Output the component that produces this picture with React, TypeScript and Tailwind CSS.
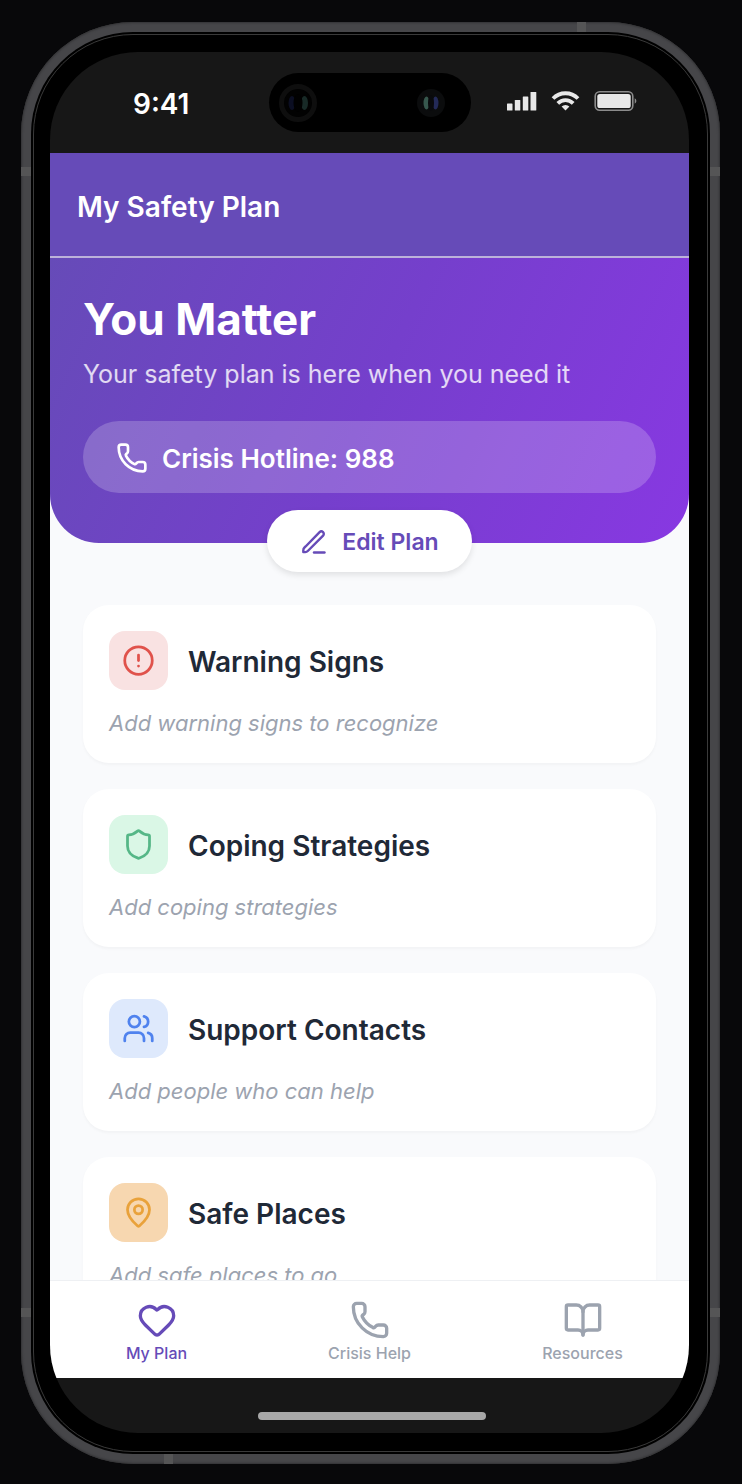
import React from "react";
import { BookOpen, CircleAlert, Heart, MapPin, Phone, Shield, Users } from "lucide-react";
import type { LucideIcon } from "lucide-react";

const sections: { title: string; hint: string; Icon: LucideIcon; tile: string }[] = [
  { title: "Warning Signs", hint: "Add warning signs to recognize", Icon: CircleAlert, tile: "bg-[#f9e2e2] text-[#e0524b]" },
  { title: "Coping Strategies", hint: "Add coping strategies", Icon: Shield, tile: "bg-[#daf7e6] text-[#55b787]" },
  { title: "Support Contacts", hint: "Add people who can help", Icon: Users, tile: "bg-[#dee9fc] text-[#4f82ee]" },
  { title: "Safe Places", hint: "Add safe places to go", Icon: MapPin, tile: "bg-[#f7d7b0] text-[#e9a23b]" },
];

const tabs: { label: string; Icon: LucideIcon; active?: boolean }[] = [
  { label: "My Plan", Icon: Heart, active: true },
  { label: "Crisis Help", Icon: Phone },
  { label: "Resources", Icon: BookOpen },
];

function PenIcon() {
  return (
    <svg className="size-7" viewBox="0 0 28 28" fill="none" stroke="currentColor" strokeWidth="2.4" strokeLinecap="round" strokeLinejoin="round" aria-hidden="true">
      <path d="M14 24.500h10.500" />
      <path d="M3.300 24.100v-1.700a4 4 0 0 1 1.100-2.700L19.600 4.200a2.400 2.400 0 0 1 3.500 3.400L7.800 23a3.500 3.500 0 0 1-2.500 1.100z" />
    </svg>
  );
}

function StatusIcons() {
  return (
    <svg className="h-[22px] w-[130px]" viewBox="0 0 130 22" fill="#e8e8e8" aria-hidden="true">
      <rect x="0" y="13.5" width="5.500" height="7" rx=".6" />
      <rect x="7.800" y="10" width="5.500" height="10.500" rx=".6" />
      <rect x="15.800" y="6.500" width="5.500" height="14" rx=".6" />
      <rect x="23.500" y="2" width="5.800" height="18.500" rx=".6" />
      <g fill="none" stroke="#e8e8e8" strokeWidth="3.800">
        <path d="M46 8.500a17.500 17.500 0 0 1 25 0" />
        <path d="M50.800 13.300a10.800 10.800 0 0 1 15.400 0" />
      </g>
      <path d="M58.500 20.500l-3.900-4a5.600 5.600 0 0 1 7.800 0z" />
      <rect x="88.200" y="1.800" width="37.600" height="18.400" rx="4.500" fill="none" stroke="#8b8b8b" strokeWidth="1.600" />
      <rect x="90.300" y="4" width="33.400" height="14" rx="2.600" />
      <path d="M127.700 8.300a3 3 0 0 1 0 5.400z" fill="#8b8b8b" />
    </svg>
  );
}

function Island() {
  return (
    <div className="flex h-[59px] items-center justify-between rounded-full bg-black pr-[26px] pl-[10px]">
      <svg className="size-[38px]" viewBox="0 0 38 38" aria-hidden="true">
        <circle cx="19" cy="19" r="16.500" fill="#020202" stroke="#0e0e0e" strokeWidth="5" />
        <ellipse cx="13" cy="19" rx="3.500" ry="7" fill="#0b0e22" />
        <ellipse cx="25.500" cy="19" rx="3.500" ry="7" fill="#182a27" />
        <ellipse cx="19" cy="19" rx="4.500" ry="9" fill="#010101" />
      </svg>
      <svg className="size-7" viewBox="0 0 28 28" aria-hidden="true">
        <circle cx="14" cy="14" r="14" fill="#0b0c0d" />
        <ellipse cx="9.500" cy="14" rx="3" ry="6.500" fill="#37584e" />
        <ellipse cx="18.500" cy="14" rx="3" ry="6.500" fill="#232a58" />
        <ellipse cx="14" cy="14" rx="3" ry="8" fill="#090a0d" />
      </svg>
    </div>
  );
}

function FrameSeams() {
  return (
    <>
      <span className="absolute top-0 right-[134px] h-[10px] w-[9px] bg-[#555556]" />
      <span className="absolute bottom-0 left-[143px] h-[10px] w-[9px] bg-[#555556]" />
      <span className="absolute top-[145px] left-0 h-[9px] w-[10px] bg-[#555556]" />
      <span className="absolute top-[145px] right-0 h-[9px] w-[10px] bg-[#555556]" />
      <span className="absolute bottom-[147px] left-0 h-[9px] w-[10px] bg-[#555556]" />
      <span className="absolute right-0 bottom-[147px] h-[9px] w-[10px] bg-[#555556]" />
    </>
  );
}

export default function App() {
  return (
    <div className="flex h-screen flex-col bg-[#08080a] px-[22px] pt-[22px] pb-[20px] pl-[21px] font-['Inter','Liberation_Sans',sans-serif]">
      <div className="relative flex min-h-0 flex-1 flex-col rounded-[112px] bg-[#464649] p-[10px] shadow-[inset_0_0_2px_1px_#333335]">
        <FrameSeams />
        <div className="flex min-h-0 flex-1 flex-col rounded-[102px] bg-black p-[2px]">
          <div className="flex min-h-0 flex-1 flex-col rounded-[100px] border border-[#3a3a3a] bg-black pt-[17px] pr-[18px] pb-[18px] pl-[16px]">
            <div className="flex min-h-0 flex-1 flex-col overflow-hidden rounded-[88px] bg-[#171717]">
              <div className="grid h-[101px] shrink-0 grid-cols-[1fr_202px_1fr] items-center">
                <span className="pt-0.5 pl-[83px] text-[28px] leading-8 font-semibold text-white">9:41</span>
                <Island />
                <div className="pb-1 pl-[36px]">
                  <StatusIcons />
                </div>
              </div>

              <header className="flex h-[105px] shrink-0 items-center border-b-2 border-[#bcb2da] bg-[#664bb8] px-[27px] pt-1">
                <h1 className="text-[28px] leading-8 font-semibold text-white">My Safety Plan</h1>
              </header>

              <main className="min-h-0 flex-1 overflow-y-auto bg-[#f9fafc] [scrollbar-width:none]">
                <section className="rounded-b-[49px] bg-linear-[115deg] from-[#664bb8] via-[#753fcc] to-[#8838e2] px-[33px] pt-8 pb-[50px] text-white">
                  <h2 className="text-[44px] leading-[58px] font-bold">You Matter</h2>
                  <p className="mt-2 text-[25px] leading-9 text-white/80">Your safety plan is here when you need it</p>
                  <a href="tel:988" className="mt-[29px] flex h-[72px] items-center gap-[14px] rounded-full bg-white/20 px-[33px] pt-0.5 text-[26px] font-semibold">
                    <Phone className="size-8" strokeWidth={2} />
                    Crisis Hotline: 988
                  </a>
                </section>

                <button type="button" className="relative mx-auto -mt-[33px] flex h-[62px] items-center gap-[14px] rounded-full bg-white px-[33px] pt-0.5 text-[23px] font-semibold text-[#664bb8] shadow-[0_3px_6px_rgba(0,0,0,0.1)]">
                  <PenIcon />
                  Edit Plan
                </button>

                <div className="mt-[33px] flex flex-col gap-[26px] px-[33px]">
                  {sections.map(({ title, hint, Icon, tile }) => (
                    <section key={title} className="rounded-[26px] bg-white p-[26px] shadow-[0_2px_3px_rgba(0,0,0,0.03)]">
                      <div className="flex items-center gap-5">
                        <span className={`flex size-[59px] items-center justify-center rounded-2xl ${tile}`}>
                          <Icon className="size-[33px]" strokeWidth={2} />
                        </span>
                        <h3 className="pt-0.5 text-[28px] leading-8 font-semibold text-[#1f2937]">{title}</h3>
                      </div>
                      <p className="mt-[19px] text-[22px] leading-7 text-[#9ca3af] italic">{hint}</p>
                    </section>
                  ))}
                </div>
              </main>

              <nav className="grid h-[98px] shrink-0 grid-cols-3 border-t border-[#eef0f3] bg-white">
                {tabs.map(({ label, Icon, active }) => (
                  <button key={label} type="button" className={`flex flex-col items-center pt-[19px] text-[16px] leading-[26px] font-medium ${active ? "text-[#664bb8]" : "text-[#9ca3af]"}`}>
                    <Icon className="size-10" strokeWidth={2} />
                    {label}
                  </button>
                ))}
              </nav>

              <div className="flex h-[55px] shrink-0 justify-center pt-[34px] pl-1">
                <span className="h-2 w-[228px] rounded-full bg-[#a8a8a8]" />
              </div>
            </div>
          </div>
        </div>
      </div>
    </div>
  );
}
